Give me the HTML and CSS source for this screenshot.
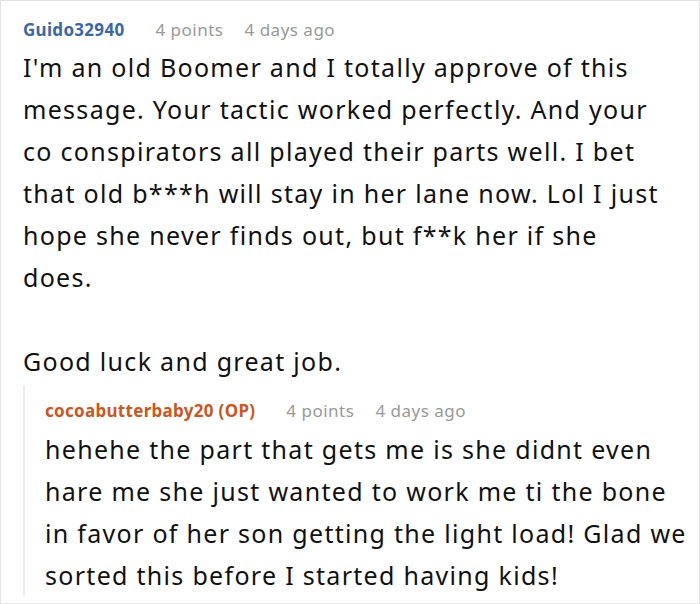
FILE: index.html
```html
<!DOCTYPE html>
<html>
<head>
<meta charset="utf-8">
<link rel="stylesheet" href="styles.css">
</head>
<body>
<div class="frame">
  <div class="comment">
    <div class="meta">
      <span class="user">Guido32940</span>
      <span class="info">4 points</span>
      <span class="info">4 days ago</span>
    </div>
    <div class="body main">
      <p>I'm an old Boomer and I totally approve of this message. Your tactic worked perfectly. And your co conspirators all played their parts well. I bet that old b***h will stay in her lane now. Lol I just hope she never finds out, but f**k her if she does.</p>
      <p>Good luck and great job.</p>
    </div>
    <div class="reply">
      <div class="meta">
        <span class="user op">cocoabutterbaby20 (OP)</span>
        <span class="info">4 points</span>
        <span class="info">4 days ago</span>
      </div>
      <div class="body">
        <p>hehehe the part that gets me is she didnt even hare me she just wanted to work me ti the bone in favor of her son getting the light load! Glad we sorted this before I started having kids!</p>
      </div>
    </div>
  </div>
</div>
</body>
</html>
```
FILE: styles.css
```css
html, body {
  margin: 0;
  padding: 0;
  background: #fff;
}
.frame {
  width: 700px;
  height: 604px;
  box-sizing: border-box;
  border: 1px solid #e4e4e4;
  overflow: hidden;
  font-family: "Noto Sans", "Open Sans", sans-serif;
}
.comment {
  padding: 15px 6px 0 22px;
}
.meta {
  display: flex;
  gap: 21px;
  font-size: 17px;
  letter-spacing: 0.5px;
  line-height: 28px;
}
.user {
  color: #3a67a8;
  font-weight: bold;
  letter-spacing: 0.3px;
  margin-right: 10px;
}
.user.op {
  color: #cc5522;
}
.info {
  color: #999;
}
.body {
  margin-top: 2px;
  font-size: 25px;
  letter-spacing: 1.3px;
  line-height: 42px;
  color: #111;
}
.body.main {
  max-width: 640px;
}
.body p {
  margin: 0 0 42px 0;
}
.body p:last-child {
  margin-bottom: 0;
}
.reply {
  margin-top: 3px;
  border-left: 2px solid #ececec;
  padding: 12px 0 0 20px;
}
.reply .body {
  margin-top: 3px;
  margin-bottom: -10px;
}
```
